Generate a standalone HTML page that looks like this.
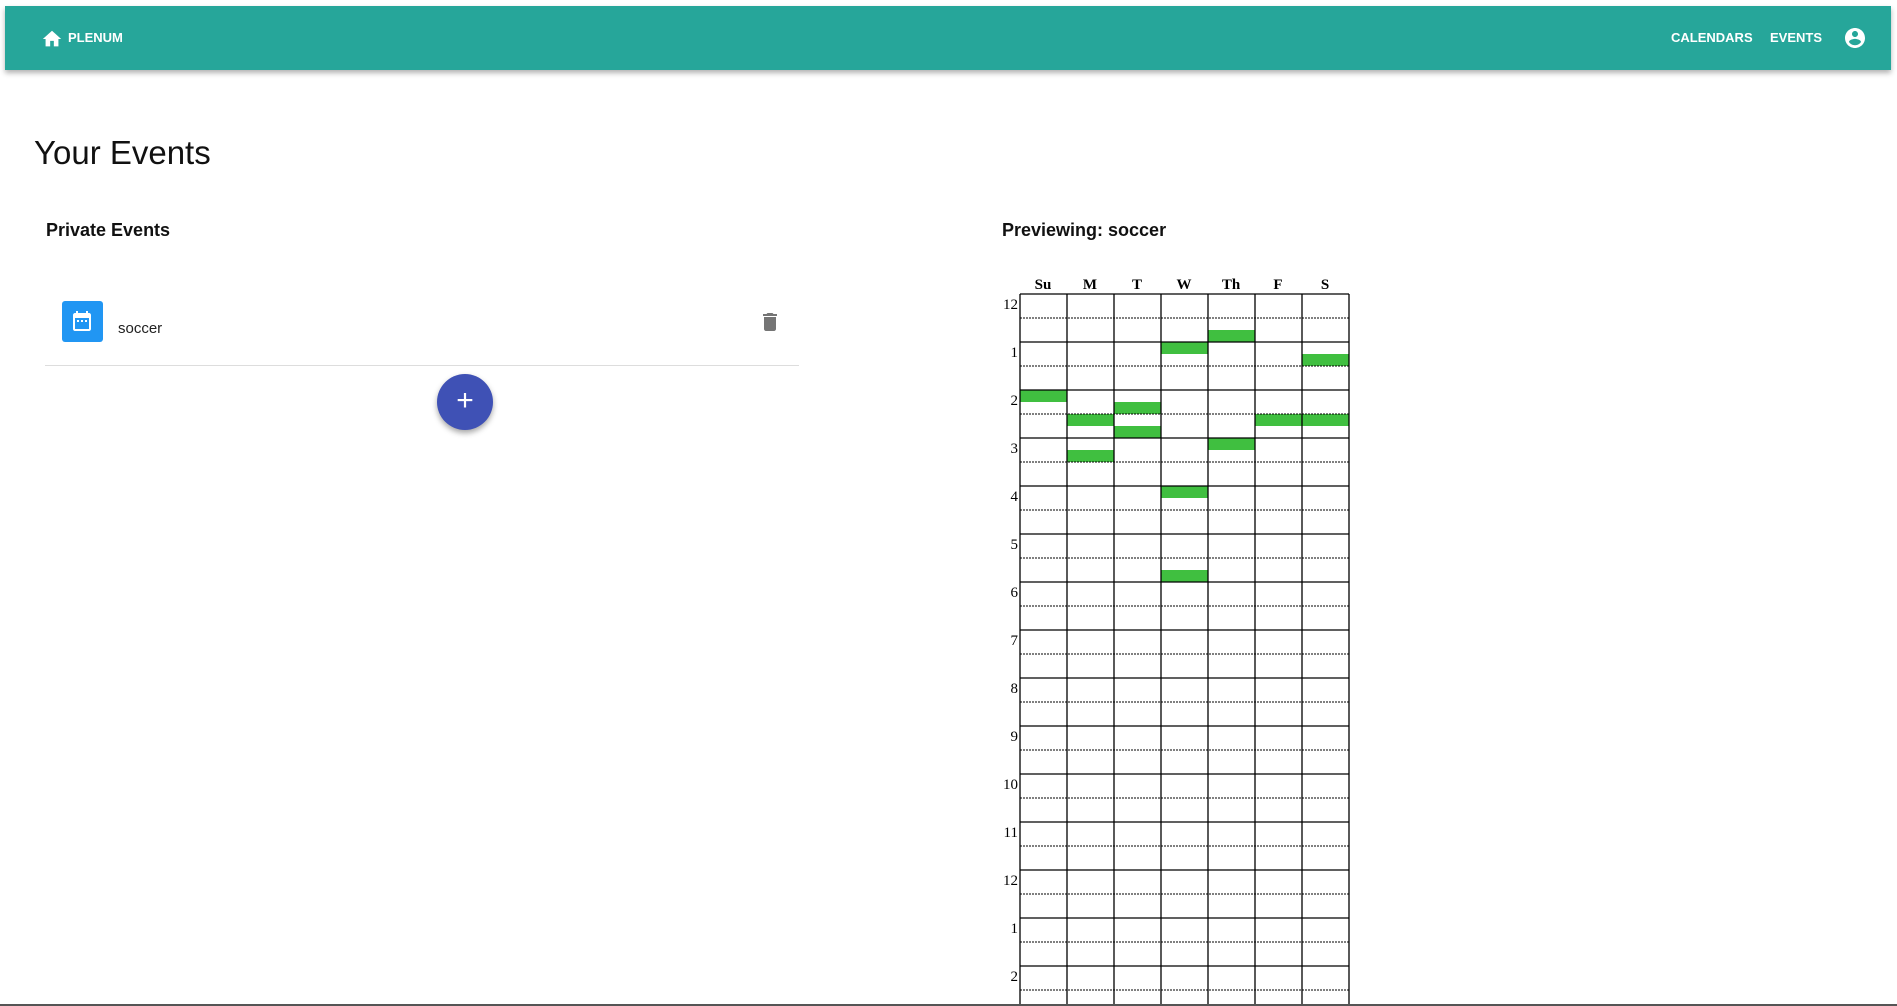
<!DOCTYPE html>
<html><head><meta charset="utf-8"><style>
body{margin:0;width:1897px;height:1006px;overflow:hidden;background:#fff;font-family:"Liberation Sans",sans-serif;position:relative}
.nav{position:absolute;left:5px;top:6px;width:1886px;height:64px;background:#26a69a;box-shadow:0 3px 5px rgba(0,0,0,.3)}
.nav span{position:absolute;color:#fff;font-weight:bold;font-size:13px;top:24px}
.a{position:absolute}
</style></head><body>
<div class="nav">
<svg class="a" style="left:36px;top:22px" width="22" height="22" viewBox="0 0 24 24"><path fill="#fff" d="M10 20v-6h4v6h5v-8h3L12 3 2 12h3v8z"/></svg>
<span style="left:63px">PLENUM</span>
<span style="left:1666px">CALENDARS</span>
<span style="left:1765px">EVENTS</span>
<svg class="a" style="left:1838px;top:20px" width="24" height="24" viewBox="0 0 24 24"><path fill="#fff" d="M12 2C6.48 2 2 6.48 2 12s4.48 10 10 10 10-4.48 10-10S17.52 2 12 2zm0 3c1.66 0 3 1.34 3 3s-1.34 3-3 3-3-1.34-3-3 1.34-3 3-3zm0 14.2c-2.5 0-4.71-1.28-6-3.22.03-1.99 4-3.08 6-3.08 1.99 0 5.97 1.09 6 3.08-1.29 1.94-3.5 3.22-6 3.22z"/></svg>
</div>
<div class="a" style="left:34px;top:134px;font-size:33px;color:#111">Your Events</div>
<div class="a" style="left:46px;top:220px;font-size:18px;font-weight:bold;color:#111">Private Events</div>
<div class="a" style="left:1002px;top:220px;font-size:18px;font-weight:bold;color:#111">Previewing: soccer</div>
<div class="a" style="left:62px;top:301px;width:41px;height:41px;background:#2196f3;border-radius:3px"></div>
<svg class="a" style="left:70px;top:309px" width="24" height="24" viewBox="0 0 24 24"><path fill="#fff" d="M9 11H7v2h2v-2zm4 0h-2v2h2v-2zm4 0h-2v2h2v-2zm2-7h-1V2h-2v2H8V2H6v2H5c-1.1 0-2 .9-2 2v14c0 1.1.9 2 2 2h14c1.1 0 2-.9 2-2V6c0-1.1-.9-2-2-2zm0 16H5V9h14v11z"/></svg>
<div class="a" style="left:118px;top:320px;font-size:15px;color:#222">soccer</div>
<svg class="a" style="left:758px;top:310px" width="24" height="24" viewBox="0 0 24 24"><path fill="#757575" d="M6 19c0 1.1.9 2 2 2h8c1.1 0 2-.9 2-2V7H6v12zM19 4h-3.5l-1-1h-5l-1 1H5v2h14V4z"/></svg>
<div class="a" style="left:45px;top:365px;width:754px;height:1px;background:#ddd"></div>
<div class="a" style="left:437px;top:374px;width:56px;height:56px;border-radius:50%;background:#3f51b5;box-shadow:0 3px 6px rgba(0,0,0,.35);color:#fff;font-size:30px;text-align:center;line-height:54px">+</div>
<svg class="a" style="left:0;top:0" width="1897" height="1006">
<g font-family="Liberation Serif,serif" font-weight="bold" font-size="15" text-anchor="middle">
<text x="1043" y="289">Su</text><text x="1090" y="289">M</text><text x="1137" y="289">T</text><text x="1184" y="289">W</text><text x="1231" y="289">Th</text><text x="1278" y="289">F</text><text x="1325" y="289">S</text>
</g>
<g fill="#40bf40">
<rect x="1208" y="330" width="47" height="12"/><rect x="1161" y="342" width="47" height="12"/><rect x="1302" y="354" width="47" height="12"/>
<rect x="1020" y="390" width="47" height="12"/><rect x="1114" y="402" width="47" height="12"/><rect x="1067" y="414" width="47" height="12"/>
<rect x="1255" y="414" width="94" height="12"/><rect x="1114" y="426" width="47" height="12"/><rect x="1208" y="438" width="47" height="12"/>
<rect x="1067" y="450" width="47" height="12"/><rect x="1161" y="486" width="47" height="12"/><rect x="1161" y="570" width="47" height="12"/>
</g>
<g stroke="#000" stroke-width="1.3">
<line x1="1020" y1="294" x2="1349" y2="294"/><line x1="1020" y1="342" x2="1349" y2="342"/><line x1="1020" y1="390" x2="1349" y2="390"/><line x1="1020" y1="438" x2="1349" y2="438"/><line x1="1020" y1="486" x2="1349" y2="486"/><line x1="1020" y1="534" x2="1349" y2="534"/><line x1="1020" y1="582" x2="1349" y2="582"/><line x1="1020" y1="630" x2="1349" y2="630"/><line x1="1020" y1="678" x2="1349" y2="678"/><line x1="1020" y1="726" x2="1349" y2="726"/><line x1="1020" y1="774" x2="1349" y2="774"/><line x1="1020" y1="822" x2="1349" y2="822"/><line x1="1020" y1="870" x2="1349" y2="870"/><line x1="1020" y1="918" x2="1349" y2="918"/><line x1="1020" y1="966" x2="1349" y2="966"/>
</g>
<g stroke="#000" stroke-width="1" stroke-dasharray="2,1">
<line x1="1020" y1="318" x2="1349" y2="318"/><line x1="1020" y1="366" x2="1349" y2="366"/><line x1="1020" y1="414" x2="1349" y2="414"/><line x1="1020" y1="462" x2="1349" y2="462"/><line x1="1020" y1="510" x2="1349" y2="510"/><line x1="1020" y1="558" x2="1349" y2="558"/><line x1="1020" y1="606" x2="1349" y2="606"/><line x1="1020" y1="654" x2="1349" y2="654"/><line x1="1020" y1="702" x2="1349" y2="702"/><line x1="1020" y1="750" x2="1349" y2="750"/><line x1="1020" y1="798" x2="1349" y2="798"/><line x1="1020" y1="846" x2="1349" y2="846"/><line x1="1020" y1="894" x2="1349" y2="894"/><line x1="1020" y1="942" x2="1349" y2="942"/><line x1="1020" y1="990" x2="1349" y2="990"/>
</g>
<g stroke="#000" stroke-width="1.3">
<line x1="1020" y1="294" x2="1020" y2="1006"/><line x1="1067" y1="294" x2="1067" y2="1006"/><line x1="1114" y1="294" x2="1114" y2="1006"/><line x1="1161" y1="294" x2="1161" y2="1006"/><line x1="1208" y1="294" x2="1208" y2="1006"/><line x1="1255" y1="294" x2="1255" y2="1006"/><line x1="1302" y1="294" x2="1302" y2="1006"/><line x1="1349" y1="294" x2="1349" y2="1006"/>
</g>
<g font-family="Liberation Serif,serif" font-size="15" text-anchor="end">
<text x="1018" y="309">12</text><text x="1018" y="357">1</text><text x="1018" y="405">2</text><text x="1018" y="453">3</text><text x="1018" y="501">4</text><text x="1018" y="549">5</text><text x="1018" y="597">6</text><text x="1018" y="645">7</text><text x="1018" y="693">8</text><text x="1018" y="741">9</text><text x="1018" y="789">10</text><text x="1018" y="837">11</text><text x="1018" y="885">12</text><text x="1018" y="933">1</text><text x="1018" y="981">2</text>
</g>
<rect x="0" y="1004" width="1897" height="2" fill="#555"/>
</svg>
</body></html>
